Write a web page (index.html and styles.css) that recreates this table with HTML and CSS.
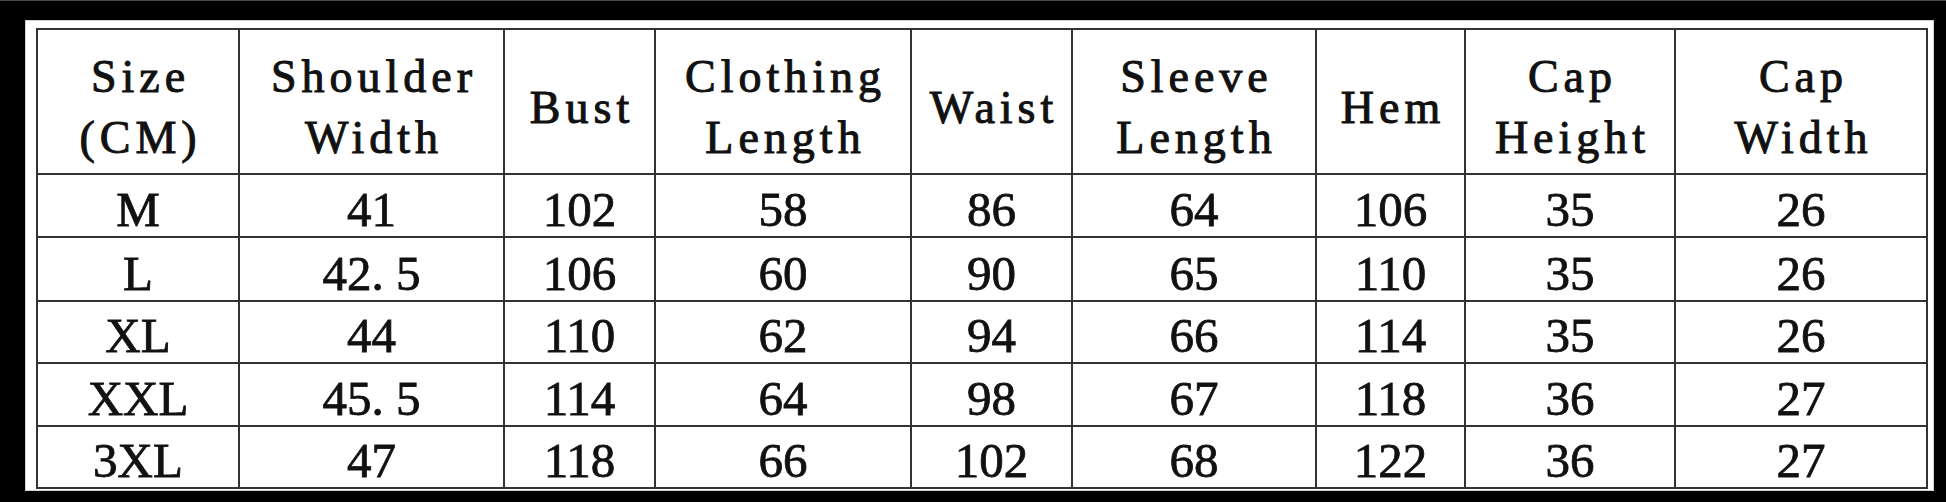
FILE: index.html
```html
<!DOCTYPE html>
<html lang="en">
<head>
<meta charset="utf-8">
<title>Size Chart</title>
<link rel="stylesheet" href="styles.css">
</head>
<body>
<div class="panel">
  <div class="chart">
    <div class="cell head">Size<br>(CM)</div>
    <div class="cell head">Shoulder<br>Width</div>
    <div class="cell head">Bust</div>
    <div class="cell head">Clothing<br>Length</div>
    <div class="cell head">Waist</div>
    <div class="cell head">Sleeve<br>Length</div>
    <div class="cell head">Hem</div>
    <div class="cell head">Cap<br>Height</div>
    <div class="cell head">Cap<br>Width</div>

    <div class="cell">M</div><div class="cell">41</div><div class="cell">102</div><div class="cell">58</div><div class="cell">86</div><div class="cell">64</div><div class="cell">106</div><div class="cell">35</div><div class="cell">26</div>
    <div class="cell">L</div><div class="cell">42. 5</div><div class="cell">106</div><div class="cell">60</div><div class="cell">90</div><div class="cell">65</div><div class="cell">110</div><div class="cell">35</div><div class="cell">26</div>
    <div class="cell">XL</div><div class="cell">44</div><div class="cell">110</div><div class="cell">62</div><div class="cell">94</div><div class="cell">66</div><div class="cell">114</div><div class="cell">35</div><div class="cell">26</div>
    <div class="cell">XXL</div><div class="cell">45. 5</div><div class="cell">114</div><div class="cell">64</div><div class="cell">98</div><div class="cell">67</div><div class="cell">118</div><div class="cell">36</div><div class="cell">27</div>
    <div class="cell">3XL</div><div class="cell">47</div><div class="cell">118</div><div class="cell">66</div><div class="cell">102</div><div class="cell">68</div><div class="cell">122</div><div class="cell">36</div><div class="cell">27</div>
  </div>
</div>
</body>
</html>
```

FILE: styles.css
```css
html, body {
  margin: 0;
  padding: 0;
  background: #000;
}
body {
  width: 1946px;
  height: 502px;
  overflow: hidden;
  border-top: 1px solid #4a4a4a;
  box-sizing: border-box;
}
.panel {
  margin: 19px 12px 0 25px;
  width: 1909px;
  height: 471px;
  box-sizing: border-box;
  background: #fff;
  border: 1px solid #d0d0d0;
  padding: 7px 5px 1px 10px;
}
.chart {
  display: grid;
  grid-template-columns: 200px 263px 149px 254px 159px 242px 147px 208px 250px;
  grid-template-rows: 143px 61px 62px 60px 61px 60px;
  gap: 2px;
  padding: 2px;
  background: #333;
  width: 1892px;
  height: 461px;
  box-sizing: border-box;
}
.cell {
  background: #fff;
  color: #111;
  display: flex;
  align-items: flex-end;
  justify-content: center;
  text-align: center;
  font-family: "Liberation Serif", "Times New Roman", serif;
  font-size: 49px;
  line-height: 50px;
  padding-bottom: 1px;
  box-sizing: border-box;
  -webkit-text-stroke: 0.8px #111;
}
.head {
  align-items: center;
  padding: 11px 0 0 5px;
  font-size: 46px;
  line-height: 61px;
  letter-spacing: 5px;
  -webkit-text-stroke: 1px #111;
}
```
